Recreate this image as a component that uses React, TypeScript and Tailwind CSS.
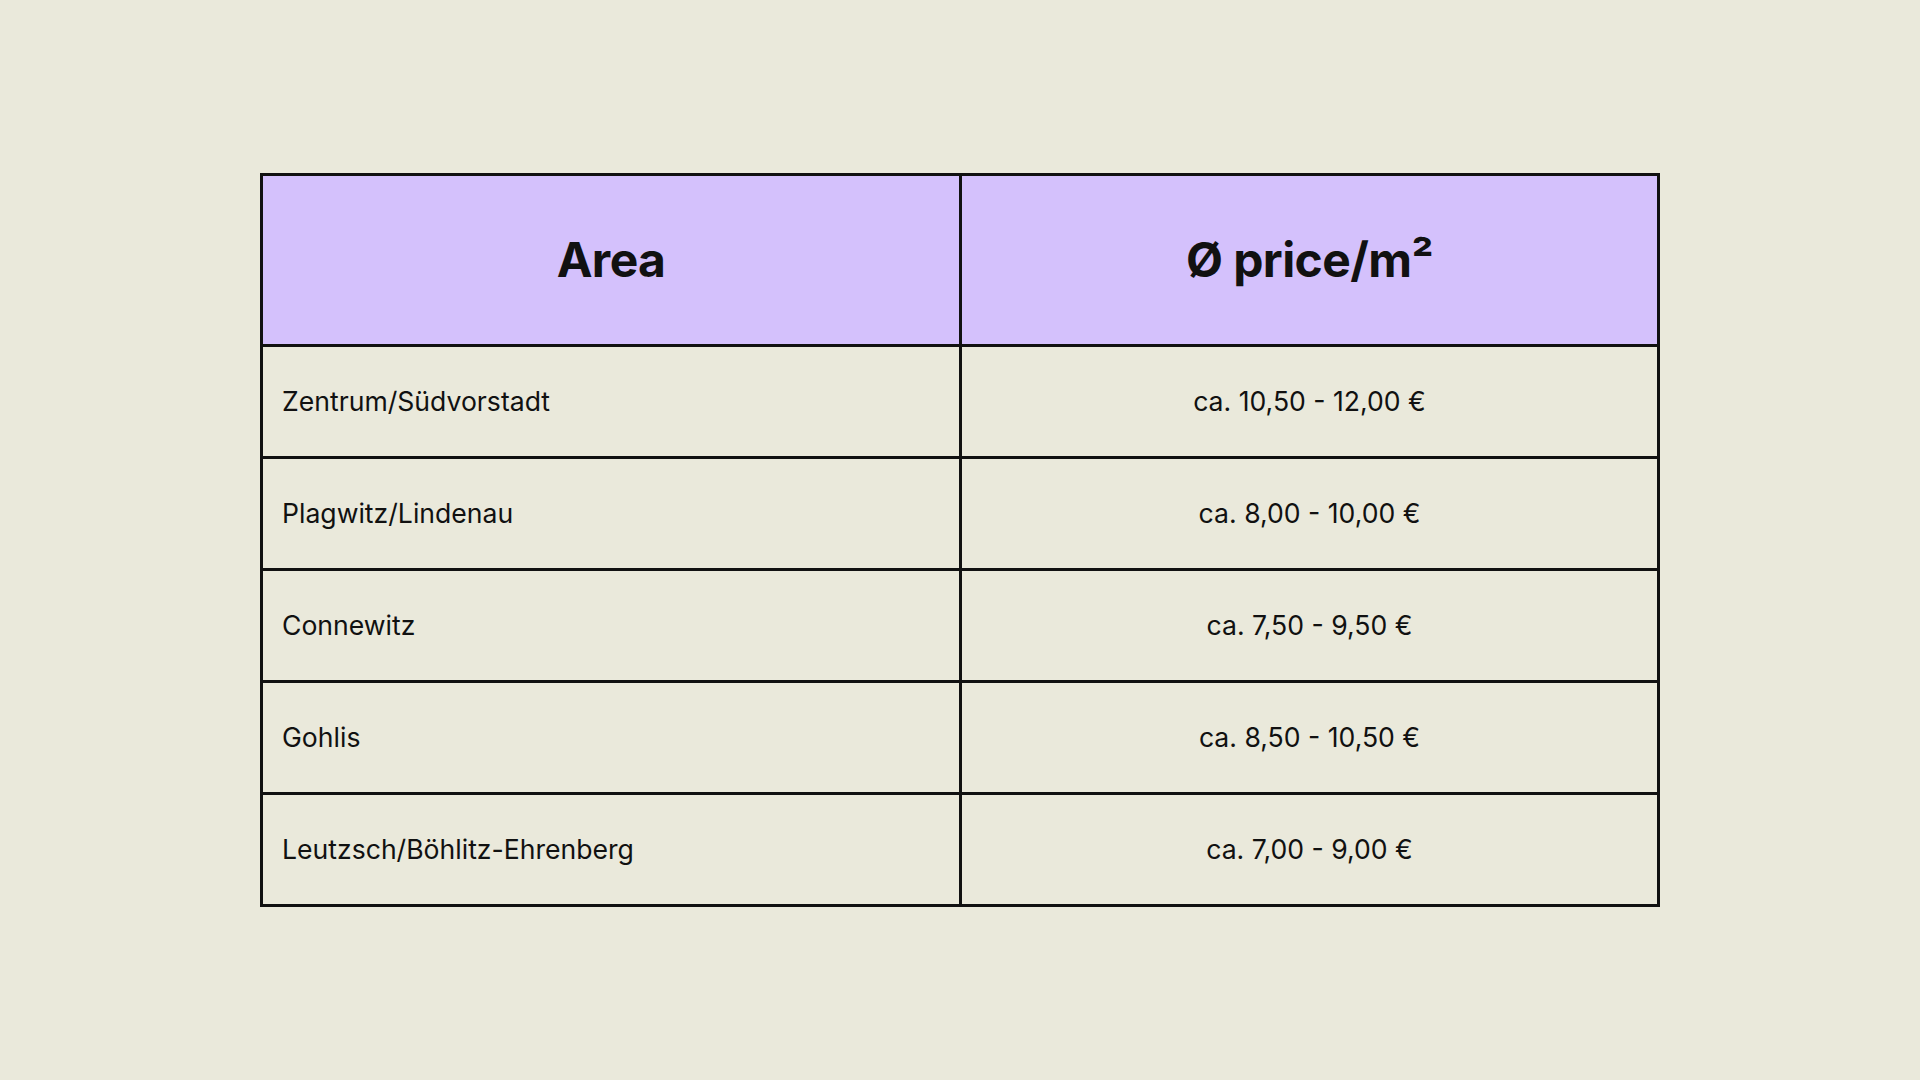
import React from "react";

const rows: [string, string][] = [
  ["Zentrum/Südvorstadt", "ca. 10,50 - 12,00 €"],
  ["Plagwitz/Lindenau", "ca. 8,00 - 10,00 €"],
  ["Connewitz", "ca. 7,50 - 9,50 €"],
  ["Gohlis", "ca. 8,50 - 10,50 €"],
  ["Leutzsch/Böhlitz-Ehrenberg", "ca. 7,00 - 9,00 €"],
];

export default function App() {
  return (
    <div
      className="w-[1920px] h-[1080px] bg-[#eae9db] pt-[173px] text-[#111111]"
      style={{ fontFamily: "Inter, 'Noto Sans', sans-serif" }}
    >
      <div className="ml-[260px] w-[1400px] border-[3px] border-[#111111]">
        <div className="grid grid-cols-[696px_1fr] h-[168px] bg-[#d4c1fc]">
          <div className="flex items-center justify-center text-[48px] font-bold tracking-[-0.6px]">
            Area
          </div>
          <div className="flex items-center justify-center border-l-[3px] border-[#111111] text-[48px] font-bold tracking-[-0.6px]">
            Ø price/m²
          </div>
        </div>
        {rows.map(([a, p]) => (
          <div
            key={a}
            className="grid grid-cols-[696px_1fr] h-[112px] border-t-[3px] border-[#111111]"
          >
            <div className="flex items-center pl-[19px] text-[26.6px]">{a}</div>
            <div className="flex items-center justify-center border-l-[3px] border-[#111111] text-[26.6px]">
              {p}
            </div>
          </div>
        ))}
      </div>
    </div>
  );
}
